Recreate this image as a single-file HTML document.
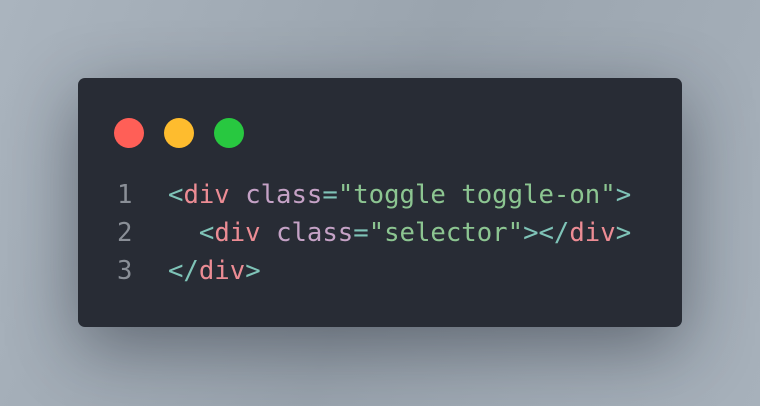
<!DOCTYPE html>
<html><head><style>
html,body{margin:0;padding:0}
body{width:760px;height:406px;overflow:hidden;background:linear-gradient(110deg,#aab4be 0%,#9aa4ae 50%,#a7b1bb 100%);position:relative}
.card{position:absolute;left:78px;top:78px;width:604px;height:249px;background:#282c35;border-radius:7px;box-shadow:0 20px 70px rgba(20,25,35,.45)}
.dot{position:absolute;top:40px;width:30px;height:30px;border-radius:50%}
.code{position:absolute;top:98px;font-family:"DejaVu Sans Mono",monospace;font-size:25.65px;line-height:38px;color:#abb2bf;white-space:pre}
.ln{color:#8a8f97}
.p{color:#7fc4b8}.t{color:#ec8c94}.a{color:#c5a2c6}.s{color:#8cc591}
</style></head><body>
<div class="card">
<div class="dot" style="left:36px;background:#ff5f57"></div>
<div class="dot" style="left:86px;background:#febc2e"></div>
<div class="dot" style="left:136px;background:#28c840"></div>
<div class="code ln" style="left:39px">1
2
3</div>
<div class="code" style="left:90px"><span class="p">&lt;</span><span class="t">div</span> <span class="a">class</span><span class="p">=</span><span class="s">"toggle toggle-on"</span><span class="p">&gt;</span>
  <span class="p">&lt;</span><span class="t">div</span> <span class="a">class</span><span class="p">=</span><span class="s">"selector"</span><span class="p">&gt;&lt;/</span><span class="t">div</span><span class="p">&gt;</span>
<span class="p">&lt;/</span><span class="t">div</span><span class="p">&gt;</span></div>
</div>
</body></html>
